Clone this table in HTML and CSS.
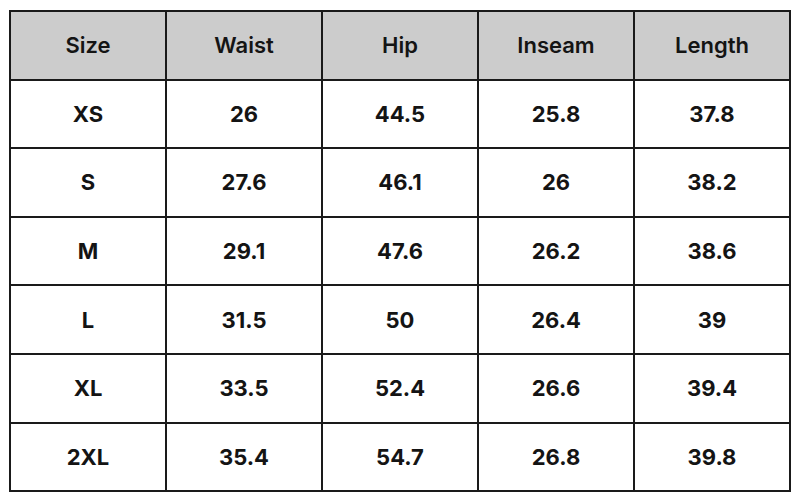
FILE: index.html
```html
<!DOCTYPE html>
<html>
<head>
<meta charset="utf-8">
<link rel="stylesheet" href="styles.css">
</head>
<body>
<table class="chart">
  <thead>
    <tr><th>Size</th><th>Waist</th><th>Hip</th><th>Inseam</th><th>Length</th></tr>
  </thead>
  <tbody>
    <tr><td>XS</td><td>26</td><td>44.5</td><td>25.8</td><td>37.8</td></tr>
    <tr><td>S</td><td>27.6</td><td>46.1</td><td>26</td><td>38.2</td></tr>
    <tr><td>M</td><td>29.1</td><td>47.6</td><td>26.2</td><td>38.6</td></tr>
    <tr><td>L</td><td>31.5</td><td>50</td><td>26.4</td><td>39</td></tr>
    <tr><td>XL</td><td>33.5</td><td>52.4</td><td>26.6</td><td>39.4</td></tr>
    <tr><td>2XL</td><td>35.4</td><td>54.7</td><td>26.8</td><td>39.8</td></tr>
  </tbody>
</table>
</body>
</html>
```
FILE: styles.css
```css
html, body {
  margin: 0;
  padding: 0;
  background: #ffffff;
}
body {
  padding: 10px 9px 0 9px;
  font-family: Inter, "Noto Sans", sans-serif;
}
.chart {
  border-collapse: collapse;
  width: 782px;
  table-layout: fixed;
}
.chart th, .chart td {
  border: 2px solid #1a1a1a;
  height: 66.6px;
  padding: 0;
  text-align: center;
  vertical-align: middle;
  font-size: 22px;
  font-weight: 700;
  color: #141414;
}
.chart th {
  background: #cccccc;
  font-weight: 600;
}
```
